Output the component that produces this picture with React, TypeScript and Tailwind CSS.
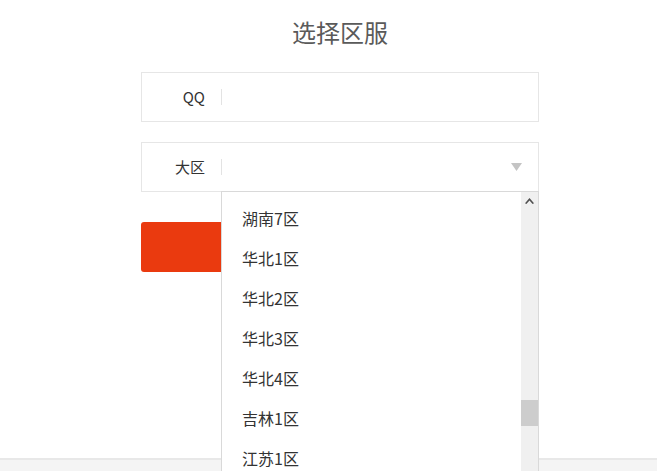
const zones = ['湖南7区', '华北1区', '华北2区', '华北3区', '华北4区', '吉林1区', '江苏1区']

function Field({ label, children }: { label: string; children?: React.ReactNode }) {
  return (
    <div className="flex h-[50px] items-center border border-[#e6e6e6] bg-white">
      <span className="w-[63px] text-right text-[15px] text-[#333]">{label}</span>
      <span className="ml-4 h-4 w-px bg-[#e3e3e3]" />
      <div className="flex flex-1 items-center justify-end pr-[16px]">{children}</div>
    </div>
  )
}

export default function App() {
  return (
    <div
      className="flex h-[471px] w-full flex-col overflow-hidden bg-white"
      style={{ fontFamily: '"Noto Sans CJK SC", "Liberation Sans", sans-serif' }}
    >
      <h1 className="ml-[141px] w-[398px] pt-4 text-center text-2xl leading-8 text-[#5a5a5a]">选择区服</h1>

      <div className="relative ml-[141px] mt-6 flex w-[398px] flex-col">
        <Field label="QQ" />
        <div className="mt-5">
          <Field label="大区">
            <svg width="11" height="8" viewBox="0 0 11 8">
              <path d="M0 0h11L5.5 8z" fill="#c4c4c4" />
            </svg>
          </Field>
        </div>
        <button className="mt-[30px] h-[50px] w-full rounded-[3px] bg-[#ea3a0f]" />

        {/* open select list */}
        <div className="absolute left-[80px] top-[119px] flex h-[300px] w-[318px] border-x border-t border-[#d9d9d9] bg-white">
          <ul className="flex-1 pt-1.5">
            {zones.map((z) => (
              <li key={z} className="flex h-10 items-center pl-5 text-[16px] text-[#333]">
                {z}
              </li>
            ))}
          </ul>
          <div className="flex w-[17px] flex-col bg-[#f0f0f0]">
            <div className="flex h-[17px] items-center justify-center">
              <svg width="9" height="6" viewBox="0 0 9 6">
                <path d="M0 5.2L4.5 0 9 5.2 7.6 6 4.5 2.4 1.4 6z" fill="#505050" />
              </svg>
            </div>
            <div className="mt-[191px] h-[26px] bg-[#cdcdcd]" />
          </div>
        </div>
      </div>

      <div className="mt-auto h-[13px] border-t-2 border-[#e8e8e8] bg-[#f4f4f4]" />
    </div>
  )
}
